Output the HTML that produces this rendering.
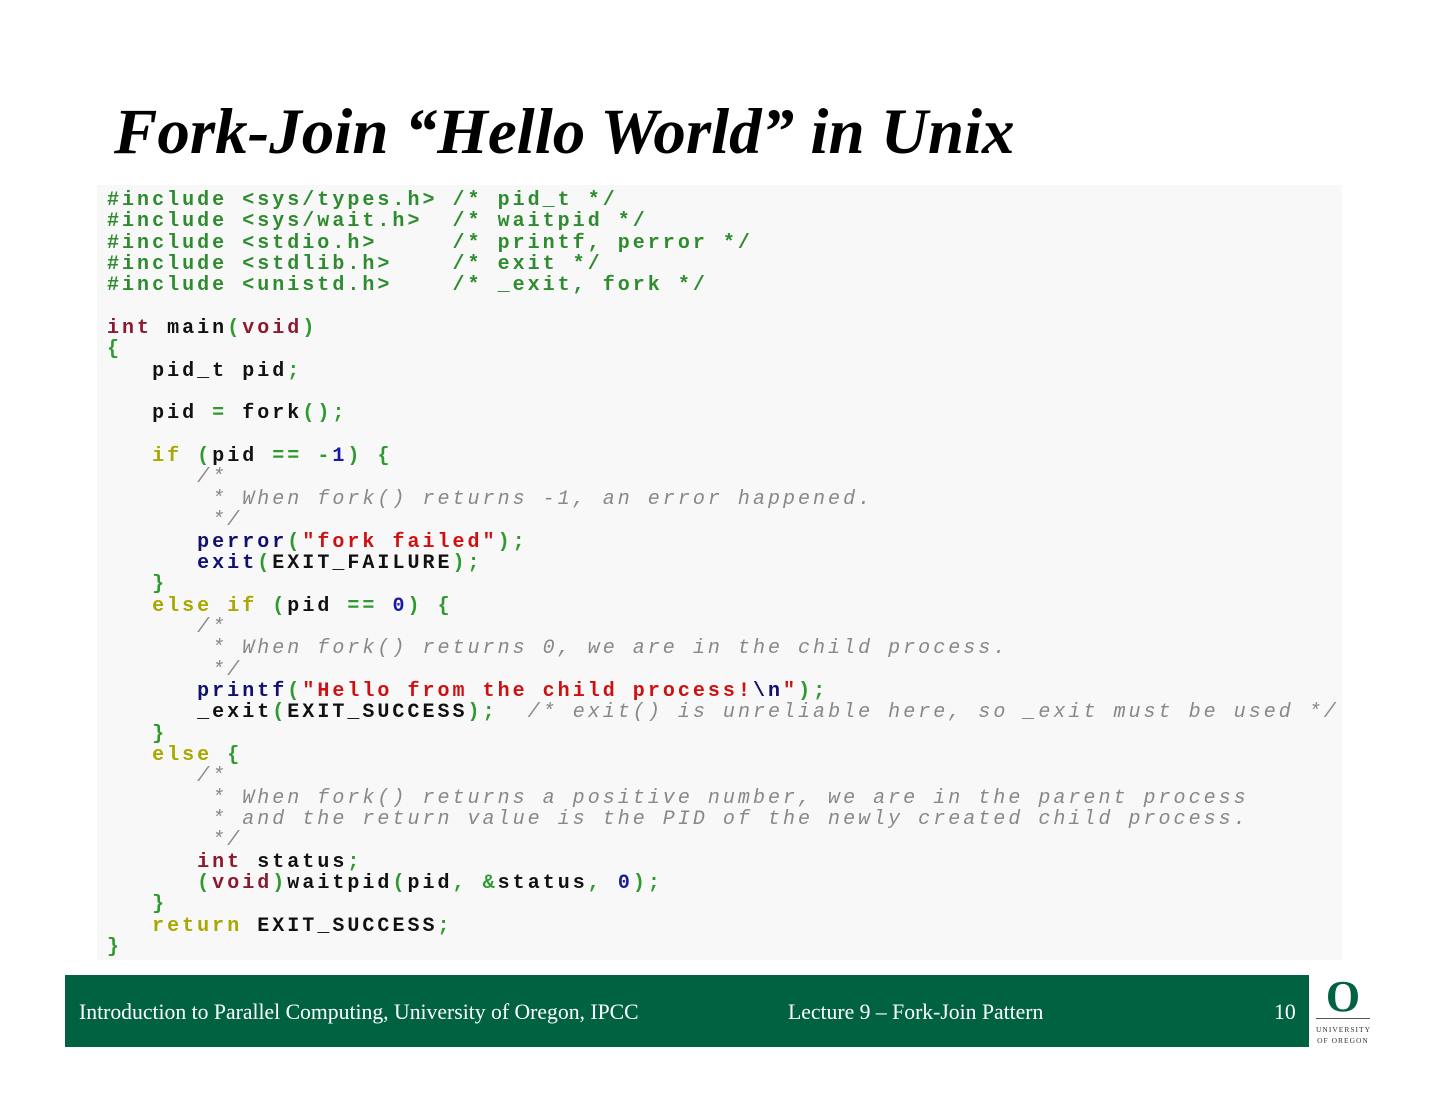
<!DOCTYPE html>
<html><head><meta charset="utf-8"><style>
body{margin:0;width:1440px;height:1113px;background:#fff;position:relative;overflow:hidden}
h1{position:absolute;left:114px;top:95px;margin:0;font:italic bold 65px "Liberation Serif",serif;color:#000;white-space:nowrap}
.code{position:absolute;left:97px;top:185px;width:1245px;height:775px;background:#f8f8f8}
pre{position:absolute;left:107px;top:190px;margin:0;font:bold 20px/21.35px "Liberation Mono",monospace;letter-spacing:3.02px;color:#111}
.p{color:#2e8b2e}.k{color:#8b1a30}.y{color:#a8a800}.g{color:#2e9a2e}.n{color:#1a1aa0}.s{color:#d01010}.f{color:#101070}
.c{color:#888;font-weight:normal;font-style:italic}
.foot{position:absolute;left:65px;top:975px;width:1244px;height:72px;background:#006241;color:#fff;font:21.7px "Liberation Serif",serif}
.foot span{position:absolute;top:25px}
.logo{position:absolute;left:1312px;top:975px;width:62px;text-align:center}
</style></head><body>
<h1>Fork-Join “Hello World” in Unix</h1>
<div class="code"></div>
<pre><span class="p">#include &lt;sys/types.h&gt; /* pid_t */
#include &lt;sys/wait.h&gt;  /* waitpid */
#include &lt;stdio.h&gt;     /* printf, perror */
#include &lt;stdlib.h&gt;    /* exit */
#include &lt;unistd.h&gt;    /* _exit, fork */</span>

<span class="k">int</span> main<span class="g">(</span><span class="k">void</span><span class="g">)</span>
<span class="g">{</span>
   pid_t pid<span class="g">;</span>

   pid <span class="g">=</span> fork<span class="g">();</span>

   <span class="y">if</span> <span class="g">(</span>pid <span class="g">==</span> <span class="g">-</span><span class="n">1</span><span class="g">)</span> <span class="g">{</span>
      <span class="c">/*
       * When fork() returns -1, an error happened.
       */</span>
      <span class="f">perror</span><span class="g">(</span><span class="s">"fork failed"</span><span class="g">);</span>
      <span class="f">exit</span><span class="g">(</span>EXIT_FAILURE<span class="g">);</span>
   <span class="g">}</span>
   <span class="y">else if</span> <span class="g">(</span>pid <span class="g">==</span> <span class="n">0</span><span class="g">)</span> <span class="g">{</span>
      <span class="c">/*
       * When fork() returns 0, we are in the child process.
       */</span>
      <span class="f">printf</span><span class="g">(</span><span class="s">"Hello from the child process!<span class="f">\n</span>"</span><span class="g">);</span>
      _exit<span class="g">(</span>EXIT_SUCCESS<span class="g">);</span>  <span class="c">/* exit() is unreliable here, so _exit must be used */</span>
   <span class="g">}</span>
   <span class="y">else</span> <span class="g">{</span>
      <span class="c">/*
       * When fork() returns a positive number, we are in the parent process
       * and the return value is the PID of the newly created child process.
       */</span>
      <span class="k">int</span> status<span class="g">;</span>
      <span class="g">(</span><span class="k">void</span><span class="g">)</span>waitpid<span class="g">(</span>pid<span class="g">,</span> <span class="g">&amp;</span>status<span class="g">,</span> <span class="n">0</span><span class="g">);</span>
   <span class="g">}</span>
   <span class="y">return</span> EXIT_SUCCESS<span class="g">;</span>
<span class="g">}</span></pre>
<div class="foot"><span style="left:14px">Introduction to Parallel Computing, University of Oregon, IPCC</span><span style="left:723px">Lecture 9 – Fork-Join Pattern</span><span style="left:1209px">10</span></div>
<div class="logo"><div style="font:bold 44px/42px 'Liberation Serif',serif;color:#006241;margin-top:1px">O</div><div style="border-top:1px solid #555;margin:0 4px;padding-top:5px;font:7.5px/11px 'Liberation Serif',serif;letter-spacing:1px;color:#333">UNIVERSITY<br>OF OREGON</div></div>
</body></html>
